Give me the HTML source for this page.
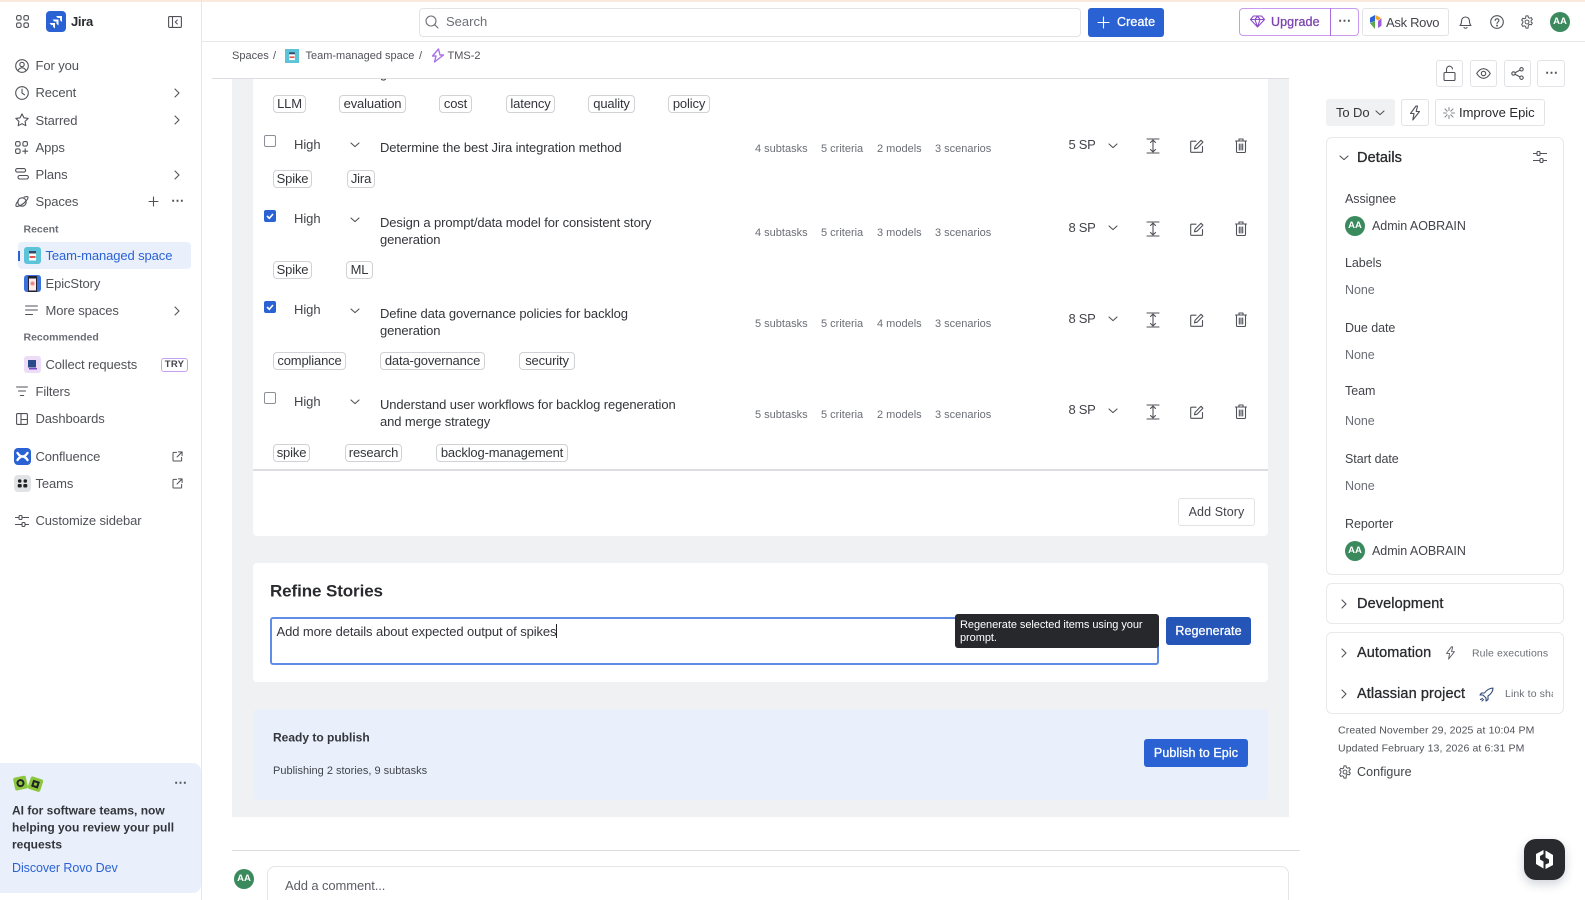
<!DOCTYPE html>
<html lang="en"><head><meta charset="utf-8"><title>TMS-2 - Jira</title>
<style>
*{box-sizing:border-box}
html,body{margin:0;padding:0;background:#fff;width:1585px;height:900px;overflow:hidden}
body{position:relative;font-family:"Liberation Sans",sans-serif;font-size:13px;color:#292a2e;filter:blur(.3px)}
.b{position:absolute}
.t{position:absolute;white-space:nowrap;transform:translateY(calc(-50% + .7px));line-height:1.2;letter-spacing:-.1px}
.s{color:#505258}
.h{font-size:13px;color:#42444a;letter-spacing:-.05px;transform:translateY(-50%)}
.sp{font-size:13px;color:#42444a;letter-spacing:-.3px;transform:translateY(-50%)}
.m{font-size:11px;color:#6b6e76;letter-spacing:0}
.ti{color:#33353a;letter-spacing:-.1px}
.tag{position:absolute;height:18px;border:1px solid #d0d2d6;border-radius:4px;text-align:center;line-height:16px;font-size:13px;color:#33353a;letter-spacing:-.15px;white-space:nowrap}
.btn{position:absolute;border:1px solid #e2e3e6;border-radius:3px;background:#fff}
.pri{position:absolute;border-radius:3px;color:#fff;text-align:center;font-weight:400;font-size:12.5px;letter-spacing:.1px;-webkit-text-stroke:.3px #fff}
.av{position:absolute;width:20px;height:20px;border-radius:50%;background:#3a8a5e;color:#fff;font-size:9.5px;font-weight:700;text-align:center;line-height:20px}
svg.i{position:absolute;fill:none;stroke:#505258;stroke-width:1.1;stroke-linecap:round;stroke-linejoin:round;overflow:visible}
.cb{position:absolute;left:264px;width:12px;height:12px;border:1px solid #8c8f97;border-radius:2px;background:#fff}
.cb.on{background:#2a62d4;border-color:#2a62d4}
.card{position:absolute;border:1px solid #e8e9eb;border-radius:6px;background:#fff;left:1326px;width:238px}
.lbl{font-size:12.5px;color:#42444a;letter-spacing:-.05px}
.non{font-size:12.5px;color:#6b6e76;letter-spacing:-.05px}
.sec{font-size:14.5px;letter-spacing:.1px;color:#292a2e;-webkit-text-stroke:.3px #292a2e}
.tiny{font-size:10.5px;color:#505258;letter-spacing:.12px}
</style></head><body>
<svg width="0" height="0" style="position:absolute">
<symbol id="cr" viewBox="0 0 12 12"><path d="M4 2 8 6 4 10"/></symbol>
<symbol id="cd" viewBox="0 0 12 12"><path d="M2 4l4 3.6L10 4"/></symbol>
<symbol id="exp" viewBox="0 0 14 16"><path d="M1 1h12M1 15h12M7 2v12M4.500 4.500 7 2l2.500 2.500M4.500 11.500 7 14l2.500-2.500"/></symbol>
<symbol id="edit" viewBox="0 0 14 14"><path d="M12.500 7.500V12.500a.8.8 0 0 1-.8.8H1.500a.8.8 0 0 1-.8-.8V3a.8.8 0 0 1 .8-.8H6M4.500 9.800l.6-2.500L11 1.300l1.900 1.900L7 9.200z"/></symbol>
<symbol id="del" viewBox="0 0 12 15"><path d="M.5 3h11M4 3V1h4v2M1.500 3v10.500a1 1 0 0 0 1 1h7a1 1 0 0 0 1-1V3M4.300 6v6M6 6v6M7.700 6v6"/></symbol>
<symbol id="ext" viewBox="0 0 12 12"><path d="M5 1.500H1.800a.7.700 0 0 0-.7.7v8a.7.700 0 0 0 .7.700h8a.7.700 0 0 0 .7-.7V7M7 1h4v4M11 1 5.500 6.500"/></symbol>
<symbol id="gear" viewBox="0 0 16 16"><circle cx="8" cy="8" r="2.200"/><path d="M6.800 1h2.400l.4 1.900 1.500.8 1.800-.7 1.200 2.100-1.400 1.200v1.700l1.400 1.200-1.200 2.100-1.800-.7-1.500.8L9.200 15H6.800l-.4-1.900-1.500-.8-1.800.7-1.200-2.100L3.300 8.700V7L1.900 5.800l1.200-2.100 1.800.7 1.500-.8z"/></symbol>
<symbol id="sl" viewBox="0 0 14 12"><path d="M0 2.500h3.500M7.500 2.500H14M0 9.500h6.500M10.500 9.500H14"/><rect x="4" y=".5" width="3" height="4" rx="1"/><rect x="7" y="7.500" width="3" height="4" rx="1"/></symbol>
<symbol id="bolt" viewBox="0 0 12 16"><path d="M7 1 1.500 8.500H5L3.800 15l6.700-8.500H7.200L8.500 1z"/></symbol>
</svg>

<!-- top peach line & header -->
<div class="b" style="left:0;top:0;width:1585px;height:1.500px;background:#fbe9dc"></div>

<!-- gray panel (under header) -->
<div class="b" style="left:232px;top:78px;width:1057px;height:739px;background:#f0f1f2"></div>
<div class="b" style="left:253px;top:79px;width:1015px;height:456.500px;background:#fff;border-radius:0 0 4px 4px"></div>
<div class="t ti" style="left:380px;top:73px">generation</div>
<div class="b" style="left:212px;top:41.500px;width:1077px;height:36px;background:#fff"></div>
<div class="b" style="left:212px;top:77.500px;width:1077px;height:1.500px;background:#dcdde0"></div>

<div class="b" style="left:201px;top:41px;width:1384px;height:1px;background:#e6e7e9"></div>
<div class="b" style="left:201px;top:0;width:1px;height:900px;background:#e6e7e9"></div>

<!-- sidebar header -->
<svg class="i" style="left:16px;top:15px" width="13" height="13" viewBox="0 0 13 13"><rect x=".6" y=".6" width="4.500" height="4.500" rx="1.500"/><rect x="7.900" y=".6" width="4.500" height="4.500" rx="1.500"/><rect x=".6" y="7.900" width="4.500" height="4.500" rx="1.500"/><rect x="7.900" y="7.900" width="4.500" height="4.500" rx="1.500"/></svg>
<svg class="b" style="left:46px;top:11px" width="20" height="21" viewBox="0 0 20 21"><rect width="20" height="21" rx="4" fill="#2a62d4"/><path d="M10 5h6v6l-2-1.800V7h-2.200zM6.500 8.500h6v6l-2-1.800v-2.200H8.300zM3.500 12h5.500v5.500l-2-1.800V14H5.200z" fill="#fff"/></svg>
<div class="t" style="left:71px;top:21px;font-weight:700;letter-spacing:-.3px;color:#292a2e">Jira</div>
<svg class="i" style="left:168px;top:16px" width="14" height="12" viewBox="0 0 14 12"><rect x=".6" y=".6" width="12.800" height="10.800" rx="1"/><path d="M4.500.6v10.800M9.300 4 7.300 6l2 2" /></svg>

<!-- sidebar items -->
<svg class="i" style="left:15px;top:59px" width="14" height="14" viewBox="0 0 14 14"><circle cx="7" cy="7" r="6.300"/><circle cx="7" cy="5.500" r="2.200"/><path d="M3 11.500c1-2 2.500-2.700 4-2.700s3 .7 4 2.700"/></svg>
<div class="t s" style="left:35.500px;top:65px">For you</div>
<svg class="i" style="left:15px;top:86px" width="14" height="14" viewBox="0 0 14 14"><circle cx="7" cy="7" r="6.300"/><path d="M7 3.200V7l2.500 1.800"/></svg>
<div class="t s" style="left:35.500px;top:92px">Recent</div>
<svg class="i" style="left:171px;top:87px" width="12" height="12"><use href="#cr"/></svg>
<svg class="i" style="left:15px;top:113px" width="14" height="14" viewBox="0 0 14 14"><path d="M7 .9l1.900 3.900 4.300.6-3.100 3 .7 4.300L7 10.700l-3.800 2 .7-4.300-3.100-3 4.300-.6z"/></svg>
<div class="t s" style="left:35.500px;top:119.500px">Starred</div>
<svg class="i" style="left:171px;top:114px" width="12" height="12"><use href="#cr"/></svg>
<svg class="i" style="left:15px;top:141px" width="14" height="13" viewBox="0 0 14 13"><rect x=".6" y=".6" width="4.500" height="4.500" rx="1.500"/><rect x="7.900" y=".6" width="4.500" height="4.500" rx="1.500"/><rect x=".6" y="7.900" width="4.500" height="4.500" rx="1.500"/><path d="M10.200 7.800v4.800M7.800 10.200h4.800"/></svg>
<div class="t s" style="left:35.500px;top:146.500px">Apps</div>
<svg class="i" style="left:15px;top:168px" width="14" height="12" viewBox="0 0 14 12"><rect x=".6" y=".6" width="10" height="3.500" rx="1.700"/><rect x="3" y="7.500" width="10.400" height="3.500" rx="1.700"/></svg>
<div class="t s" style="left:35.500px;top:174px">Plans</div>
<svg class="i" style="left:171px;top:168.500px" width="12" height="12"><use href="#cr"/></svg>
<svg class="i" style="left:15px;top:195px" width="14" height="14" viewBox="0 0 14 14"><ellipse cx="7" cy="7" rx="4.200" ry="4.200"/><path d="M3.500 5.500C1.800 7.500.5 10 1 11s3 .3 6-1.500 6-5.500 6-7-2-1-4-.3"/></svg>
<div class="t s" style="left:35.500px;top:201px">Spaces</div>
<svg class="i" style="left:148px;top:196px" width="11" height="11" viewBox="0 0 11 11"><path d="M5.500 1v9M1 5.500h9"/></svg>
<div class="t s" style="left:171px;top:200px;font-size:13px;font-weight:700;letter-spacing:1px;line-height:1">&#8943;</div>
<div class="t" style="left:23.500px;top:228.500px;font-size:10.500px;font-weight:700;color:#6b6e76;letter-spacing:0">Recent</div>
<div class="b" style="left:18px;top:242px;width:173px;height:27px;background:#e9f0fc;border-radius:4px"></div>
<div class="b" style="left:18px;top:251px;width:1.500px;height:10px;background:#2a62d4"></div>
<svg class="b" style="left:24px;top:247px" width="17" height="17" viewBox="0 0 17 17"><rect width="17" height="17" rx="3" fill="#5dc3d8"/><rect x="5" y="4" width="7" height="2.500" fill="#3a4a66"/><rect x="5" y="6.500" width="7" height="7" fill="#fff"/><rect x="5.500" y="9" width="6" height="2" fill="#e2574c"/></svg>
<div class="t" style="left:45.500px;top:255px;color:#2a62d4">Team-managed space</div>
<svg class="b" style="left:24px;top:275px" width="17" height="17" viewBox="0 0 17 17"><rect width="17" height="17" rx="3" fill="#3a72dc"/><rect x="4" y="1" width="9" height="16" fill="#223"/><rect x="5" y="3.500" width="7" height="12" fill="#fbeae5"/><circle cx="8.500" cy="8.500" r="2" fill="#e88"/></svg>
<div class="t s" style="left:45.500px;top:282.500px">EpicStory</div>
<svg class="i" style="left:25px;top:305px" width="13" height="11" viewBox="0 0 13 11"><path d="M.6 1h11.800M.6 5h11.800M.6 9.500h7"/></svg>
<div class="t s" style="left:45.500px;top:310px">More spaces</div>
<svg class="i" style="left:171px;top:304.500px" width="12" height="12"><use href="#cr"/></svg>
<div class="t" style="left:23.500px;top:337px;font-size:10.500px;font-weight:700;color:#6b6e76;letter-spacing:0">Recommended</div>
<svg class="b" style="left:24px;top:356px" width="17" height="17" viewBox="0 0 17 17"><rect width="17" height="17" rx="3" fill="#ecdcf8"/><rect x="4" y="4" width="8" height="7.500" fill="#2a4a8a"/><path d="M5 12h8v1.500H5z" fill="#7a4bc8"/></svg>
<div class="t s" style="left:45.500px;top:364px">Collect requests</div>
<div class="b" style="left:161px;top:358px;width:27px;height:14px;border:1px solid #c9a0ef;border-radius:3px;text-align:center;font-size:9.500px;line-height:12px;font-weight:700;color:#44464c;letter-spacing:.3px">TRY</div>
<svg class="i" style="left:16px;top:386px" width="12" height="11" viewBox="0 0 12 11"><path d="M.6 1h10.800M2.500 5h7M4.300 9.500h3.400"/></svg>
<div class="t s" style="left:35.500px;top:391px">Filters</div>
<svg class="i" style="left:16px;top:413px" width="12" height="12" viewBox="0 0 12 12"><rect x=".6" y=".6" width="10.800" height="10.800" rx="1"/><path d="M5 .6v10.800M5 6.500h6.400"/></svg>
<div class="t s" style="left:35.500px;top:418px">Dashboards</div>
<svg class="b" style="left:13.500px;top:448px" width="17" height="17" viewBox="0 0 17 17"><rect width="17" height="17" rx="4" fill="#2a62d4"/><path d="M3.500 5c2 3 3.500 3.500 5 3.500s3-.5 5-3.500M3.500 12c2-3 3.500-3.500 5-3.500s3 .5 5 3.500" fill="none" stroke="#fff" stroke-width="2.400" stroke-linecap="round"/></svg>
<div class="t s" style="left:35.500px;top:455.500px">Confluence</div>
<svg class="i" style="left:171.500px;top:450.500px" width="11" height="11"><use href="#ext"/></svg>
<svg class="b" style="left:13.500px;top:475px" width="17" height="17" viewBox="0 0 17 17"><rect width="17" height="17" rx="4" fill="#e2e3e6"/><circle cx="5.700" cy="6" r="1.800" fill="#222"/><circle cx="11.300" cy="6" r="1.800" fill="#222"/><rect x="3.700" y="9" width="4" height="3.500" rx="1" fill="#222"/><rect x="9.300" y="9" width="4" height="3.500" rx="1" fill="#222"/></svg>
<div class="t s" style="left:35.500px;top:482.500px">Teams</div>
<svg class="i" style="left:171.500px;top:477.500px" width="11" height="11"><use href="#ext"/></svg>
<svg class="i" style="left:15px;top:515px" width="14" height="12"><use href="#sl"/></svg>
<div class="t s" style="left:35.500px;top:520px">Customize sidebar</div>

<!-- promo -->
<div class="b" style="left:0;top:763px;width:201px;height:130px;background:#e9f0fc;border-radius:0 8px 8px 0"></div>
<svg class="b" style="left:12px;top:774px" width="33" height="20" viewBox="0 0 33 20"><g transform="rotate(-12 9 9)"><rect x="2" y="2.500" width="13" height="13" rx="2" fill="#8cc63f"/><circle cx="8.500" cy="9" r="3" fill="none" stroke="#222" stroke-width="2"/></g><g transform="rotate(18 23 10)"><rect x="17" y="3.500" width="13" height="13" rx="2" fill="#8cc63f"/><rect x="21" y="7.500" width="5" height="5" fill="none" stroke="#222" stroke-width="2"/></g></svg>
<div class="t s" style="left:174px;top:782px;font-size:13px;font-weight:700;line-height:1;letter-spacing:1px">&#8943;</div>
<div class="t" style="left:12px;top:810px;font-size:12px;font-weight:700;letter-spacing:0;color:#33353a">AI for software teams, now</div>
<div class="t" style="left:12px;top:827px;font-size:12px;font-weight:700;letter-spacing:0;color:#33353a">helping you review your pull</div>
<div class="t" style="left:12px;top:844px;font-size:12px;font-weight:700;letter-spacing:0;color:#33353a">requests</div>
<div class="t" style="left:12px;top:867.500px;font-size:12.500px;color:#2a62d4;letter-spacing:-.08px">Discover Rovo Dev</div>

<!-- top bar -->
<div class="b" style="left:419px;top:8px;width:662px;height:29px;border:1px solid #e2e3e6;border-radius:4px"></div>
<svg class="i" style="left:425px;top:15px;stroke:#6b6e76" width="14" height="14" viewBox="0 0 14 14"><circle cx="6" cy="6" r="5"/><path d="M9.700 9.700 13 13"/></svg>
<div class="t" style="left:446px;top:21px;color:#6b6e76;letter-spacing:0">Search</div>
<div class="pri" style="left:1088px;top:8px;width:76px;height:29px;background:#2a62d4"></div>
<svg class="i" style="left:1097px;top:16px;stroke:#fff" width="13" height="13" viewBox="0 0 13 13"><path d="M6.500 1v11M1 6.500h11"/></svg>
<div class="t" style="left:1117px;top:21.500px;color:#fff;font-size:12.500px;letter-spacing:.1px;-webkit-text-stroke:.3px #fff">Create</div>
<div class="b" style="left:1239px;top:8px;width:120px;height:27.500px;border:1px solid #c99aed;border-radius:4px"></div>
<div class="b" style="left:1330px;top:8px;width:1px;height:27.500px;background:#a86ee0"></div>
<svg class="i" style="left:1250px;top:15px;stroke:#8a4bc8" width="15" height="13" viewBox="0 0 15 13"><path d="M3.500 1h8l3 3.500L7.500 12 .5 4.500zM.5 4.500h14M5 4.500l2.500 7.500L10 4.500 7.500 1z"/></svg>
<div class="t" style="left:1271px;top:21.500px;color:#7c45ae;font-size:12.500px;letter-spacing:.1px;-webkit-text-stroke:.3px #7c45ae">Upgrade</div>
<div class="t s" style="left:1338px;top:20px;font-size:13px;font-weight:700;line-height:1;letter-spacing:1px">&#8943;</div>
<div class="btn" style="left:1362px;top:8px;width:87px;height:27.500px"></div>
<svg class="b" style="left:1369px;top:15px" width="13" height="14" viewBox="0 0 13 14"><path d="M6 0 1 2.800v5L6 6z" fill="#2a62d4"/><path d="M6.500 0 12 3 9 5.500 6.500 4z" fill="#f5a623"/><path d="M12.500 3.300v7.500L9 13V6z" fill="#9c5ce0"/><path d="M1 8.200 6 6v8z" fill="#5aa84a"/></svg>
<div class="t" style="left:1386px;top:21.500px;color:#44464c;font-size:13px;letter-spacing:-.3px">Ask Rovo</div>
<svg class="i" style="left:1459px;top:15px" width="13" height="14" viewBox="0 0 13 14"><path d="M1 10.500c1-1 1.500-2 1.500-4.500a4 4 0 0 1 8 0c0 2.500.5 3.500 1.500 4.500zM5 12.500c.5 1 2.500 1 3 0"/></svg>
<svg class="i" style="left:1490px;top:15px" width="14" height="14" viewBox="0 0 14 14"><circle cx="7" cy="7" r="6.300"/><path d="M5.200 5.500c0-2.300 3.700-2.300 3.700 0 0 1.500-1.900 1.500-1.900 3"/><circle cx="7" cy="10.600" r=".4"/></svg>
<svg class="i" style="left:1520px;top:15px" width="14" height="14"><use href="#gear"/></svg>
<div class="av" style="left:1550px;top:11.500px">AA</div>

<!-- breadcrumbs -->
<div class="t" style="left:232px;top:55.500px;font-size:11px;color:#505258;letter-spacing:0">Spaces</div>
<div class="t" style="left:273px;top:55.500px;font-size:11px;color:#505258;letter-spacing:0">/</div>
<svg class="b" style="left:285px;top:49px" width="14" height="14" viewBox="0 0 17 17"><rect width="17" height="17" fill="#5dc3d8"/><rect x="5" y="4" width="7" height="2.500" fill="#3a4a66"/><rect x="5" y="6.500" width="7" height="7" fill="#fff"/><rect x="5.500" y="9" width="6" height="2" fill="#e2574c"/></svg>
<div class="t" style="left:305.500px;top:55.500px;font-size:11px;color:#505258;letter-spacing:0">Team-managed space</div>
<div class="t" style="left:419px;top:55.500px;font-size:11px;color:#505258;letter-spacing:0">/</div>
<svg class="i" style="left:431px;top:48px;stroke:#a872e8;stroke-width:1.400" width="14" height="15" viewBox="0 0 14 15"><path d="M7.500 1 1.500 8h3.500L4 12l-.5 2L12.500 7H9z"/></svg>
<div class="t" style="left:447.500px;top:55.500px;font-size:11px;color:#505258;letter-spacing:0">TMS-2</div>

<!-- tags row 0 -->
<div class="tag" style="left:273px;top:95px;width:33px">LLM</div>
<div class="tag" style="left:339px;top:95px;width:67px">evaluation</div>
<div class="tag" style="left:439px;top:95px;width:33px">cost</div>
<div class="tag" style="left:506px;top:95px;width:49px">latency</div>
<div class="tag" style="left:588px;top:95px;width:47px">quality</div>
<div class="tag" style="left:668px;top:95px;width:42px">policy</div>

<!-- row 1 -->
<div class="cb" style="top:135px"></div>
<div class="t h" style="left:294px;top:144.500px">High</div>
<svg class="i" style="left:349px;top:139px" width="12" height="12"><use href="#cd"/></svg>
<div class="t ti" style="left:380px;top:146.500px">Determine the best Jira integration method</div>
<div class="t m" style="left:755px;top:149px">4 subtasks</div><div class="t m" style="left:821px;top:149px">5 criteria</div><div class="t m" style="left:877px;top:149px">2 models</div><div class="t m" style="left:935px;top:149px">3 scenarios</div>
<div class="t sp" style="left:1068.500px;top:144.500px">5 SP</div>
<svg class="i" style="left:1107px;top:139.500px" width="12" height="12"><use href="#cd"/></svg>
<svg class="i" style="left:1146px;top:138px" width="14" height="16"><use href="#exp"/></svg>
<svg class="i" style="left:1190px;top:139px" width="14" height="14"><use href="#edit"/></svg>
<svg class="i" style="left:1235px;top:138px" width="12" height="15"><use href="#del"/></svg>
<div class="tag" style="left:273px;top:170px;width:39px">Spike</div>
<div class="tag" style="left:347px;top:170px;width:28px">Jira</div>

<!-- row 2 -->
<div class="cb on" style="top:210px"><svg width="10" height="10" style="position:absolute;left:0;top:0" viewBox="0 0 10 10"><path d="M2 5l2.300 2.300L8 3" fill="none" stroke="#fff" stroke-width="1.600"/></svg></div>
<div class="t h" style="left:294px;top:219px">High</div>
<svg class="i" style="left:349px;top:213.500px" width="12" height="12"><use href="#cd"/></svg>
<div class="t ti" style="left:380px;top:221.500px">Design a prompt/data model for consistent story</div>
<div class="t ti" style="left:380px;top:239px">generation</div>
<div class="t m" style="left:755px;top:232.500px">4 subtasks</div><div class="t m" style="left:821px;top:232.500px">5 criteria</div><div class="t m" style="left:877px;top:232.500px">3 models</div><div class="t m" style="left:935px;top:232.500px">3 scenarios</div>
<div class="t sp" style="left:1068.500px;top:227.500px">8 SP</div>
<svg class="i" style="left:1107px;top:222px" width="12" height="12"><use href="#cd"/></svg>
<svg class="i" style="left:1146px;top:221px" width="14" height="16"><use href="#exp"/></svg>
<svg class="i" style="left:1190px;top:222px" width="14" height="14"><use href="#edit"/></svg>
<svg class="i" style="left:1235px;top:221px" width="12" height="15"><use href="#del"/></svg>
<div class="tag" style="left:273px;top:261px;width:39px">Spike</div>
<div class="tag" style="left:346px;top:261px;width:27px">ML</div>

<!-- row 3 -->
<div class="cb on" style="top:301px"><svg width="10" height="10" style="position:absolute;left:0;top:0" viewBox="0 0 10 10"><path d="M2 5l2.300 2.300L8 3" fill="none" stroke="#fff" stroke-width="1.600"/></svg></div>
<div class="t h" style="left:294px;top:310px">High</div>
<svg class="i" style="left:349px;top:304.500px" width="12" height="12"><use href="#cd"/></svg>
<div class="t ti" style="left:380px;top:313px">Define data governance policies for backlog</div>
<div class="t ti" style="left:380px;top:330px">generation</div>
<div class="t m" style="left:755px;top:323.500px">5 subtasks</div><div class="t m" style="left:821px;top:323.500px">5 criteria</div><div class="t m" style="left:877px;top:323.500px">4 models</div><div class="t m" style="left:935px;top:323.500px">3 scenarios</div>
<div class="t sp" style="left:1068.500px;top:318.500px">8 SP</div>
<svg class="i" style="left:1107px;top:313px" width="12" height="12"><use href="#cd"/></svg>
<svg class="i" style="left:1146px;top:312px" width="14" height="16"><use href="#exp"/></svg>
<svg class="i" style="left:1190px;top:313px" width="14" height="14"><use href="#edit"/></svg>
<svg class="i" style="left:1235px;top:312px" width="12" height="15"><use href="#del"/></svg>
<div class="tag" style="left:273px;top:352px;width:73px">compliance</div>
<div class="tag" style="left:380px;top:352px;width:105px">data-governance</div>
<div class="tag" style="left:519px;top:352px;width:56px">security</div>

<!-- row 4 -->
<div class="cb" style="top:392px"></div>
<div class="t h" style="left:294px;top:401.500px">High</div>
<svg class="i" style="left:349px;top:396px" width="12" height="12"><use href="#cd"/></svg>
<div class="t ti" style="left:380px;top:404px">Understand user workflows for backlog regeneration</div>
<div class="t ti" style="left:380px;top:421px">and merge strategy</div>
<div class="t m" style="left:755px;top:415px">5 subtasks</div><div class="t m" style="left:821px;top:415px">5 criteria</div><div class="t m" style="left:877px;top:415px">2 models</div><div class="t m" style="left:935px;top:415px">3 scenarios</div>
<div class="t sp" style="left:1068.500px;top:410px">8 SP</div>
<svg class="i" style="left:1107px;top:404.500px" width="12" height="12"><use href="#cd"/></svg>
<svg class="i" style="left:1146px;top:403.500px" width="14" height="16"><use href="#exp"/></svg>
<svg class="i" style="left:1190px;top:404.500px" width="14" height="14"><use href="#edit"/></svg>
<svg class="i" style="left:1235px;top:403.500px" width="12" height="15"><use href="#del"/></svg>
<div class="tag" style="left:273px;top:443.500px;width:37px">spike</div>
<div class="tag" style="left:345px;top:443.500px;width:57px">research</div>
<div class="tag" style="left:436px;top:443.500px;width:132px">backlog-management</div>

<div class="b" style="left:253px;top:469px;width:1015px;height:1.500px;background:#dcdde0"></div>
<div class="btn" style="left:1178px;top:498px;width:77px;height:28px;text-align:center;line-height:26px;font-size:12.500px;color:#42444a;letter-spacing:.1px">Add Story</div>

<!-- refine -->
<div class="b" style="left:253px;top:562.500px;width:1015px;height:119.500px;background:#fff;border-radius:4px"></div>
<div class="t" style="left:270px;top:590.500px;font-size:17px;font-weight:700;letter-spacing:-.1px;color:#292a2e">Refine Stories</div>
<div class="b" style="left:270px;top:617px;width:889px;height:48px;border:2px solid #5f8ce6;border-radius:3px"></div>
<div class="t ti" style="left:276.500px;top:631px">Add more details about expected output of spikes</div>
<div class="b" style="left:556px;top:624px;width:1px;height:14px;background:#222"></div>
<div class="b" style="left:955px;top:613.500px;width:204px;height:34.500px;background:#26282c;border-radius:3px"></div>
<div class="t" style="left:960px;top:624.500px;font-size:11px;color:#fff;letter-spacing:-.06px">Regenerate selected items using your</div>
<div class="t" style="left:960px;top:638px;font-size:11px;color:#fff;letter-spacing:-.06px">prompt.</div>
<div class="pri" style="left:1166px;top:617px;width:85px;height:27.500px;background:#2655b8;line-height:28.500px">Regenerate</div>

<!-- publish -->
<div class="b" style="left:253px;top:709px;width:1015px;height:90.500px;background:#e9f0fc;border-radius:4px"></div>
<div class="t" style="left:273px;top:737px;font-size:12px;font-weight:700;letter-spacing:0;color:#33353a">Ready to publish</div>
<div class="t" style="left:273px;top:770.500px;font-size:11px;color:#42444a;letter-spacing:0">Publishing 2 stories, 9 subtasks</div>
<div class="pri" style="left:1144px;top:738.500px;width:104px;height:28px;background:#2a62d4;line-height:29px">Publish to Epic</div>

<!-- comment -->
<div class="b" style="left:232px;top:849.500px;width:1068px;height:1.500px;background:#dcdde0"></div>
<div class="av" style="left:234px;top:868.500px">AA</div>
<div class="b" style="left:267px;top:865.500px;width:1022px;height:45px;border:1.500px solid #e4e5e8;border-radius:8px"></div>
<div class="t" style="left:285px;top:885px;color:#5d5f66;letter-spacing:-.1px">Add a comment...</div>

<!-- right actions -->
<div class="btn" style="left:1436px;top:60px;width:27px;height:27px"></div>
<svg class="i" style="left:1443px;top:66px" width="13" height="15" viewBox="0 0 13 15"><rect x="1" y="6.500" width="11" height="8" rx="1"/><path d="M3.500 6.500V3.500a3 3 0 0 1 6-.6"/></svg>
<div class="btn" style="left:1470px;top:60px;width:27px;height:27px"></div>
<svg class="i" style="left:1476px;top:68px" width="15" height="11" viewBox="0 0 15 11"><path d="M.7 5.500C3 1.800 5.300.7 7.500.7s4.500 1.100 6.800 4.800C12 9.200 9.700 10.300 7.500 10.300S3 9.200.7 5.500z"/><circle cx="7.500" cy="5.500" r="2.200"/></svg>
<div class="btn" style="left:1504px;top:60px;width:27px;height:27px"></div>
<svg class="i" style="left:1511px;top:67px" width="13" height="13" viewBox="0 0 13 13"><circle cx="2.500" cy="6.500" r="1.700"/><circle cx="10.500" cy="2.300" r="1.700"/><circle cx="10.500" cy="10.700" r="1.700"/><path d="M4 5.700 9 3.100M4 7.300l5 2.600"/></svg>
<div class="btn" style="left:1537px;top:60px;width:28px;height:27px"></div>
<div class="t s" style="left:1545px;top:72px;font-size:13px;font-weight:700;line-height:1;letter-spacing:1px">&#8943;</div>

<div class="b" style="left:1326px;top:99px;width:69px;height:27px;background:#f0f1f2;border-radius:3px"></div>
<div class="t" style="left:1336px;top:112px;color:#33353a">To Do</div>
<svg class="i" style="left:1374px;top:106.500px" width="12" height="12"><use href="#cd"/></svg>
<div class="btn" style="left:1401px;top:99px;width:28px;height:27px"></div>
<svg class="i" style="left:1409px;top:105px" width="12" height="16"><use href="#bolt"/></svg>
<div class="btn" style="left:1435px;top:99px;width:110px;height:27px"></div>
<svg class="i" style="left:1443px;top:107px;stroke:#8a8d94" width="12" height="12" viewBox="0 0 12 12"><path d="M6 .5v3M6 8.500v3M.5 6h3M8.500 6h3M2 2l2.200 2.200M7.800 7.800 10 10M10 2 7.800 4.200M4.200 7.800 2 10"/></svg>
<div class="t" style="left:1459px;top:112px;letter-spacing:-.02px;color:#292a2e">Improve Epic</div>

<!-- details -->
<div class="card" style="top:137px;height:438px"></div>
<svg class="i" style="left:1338px;top:152px" width="12" height="12"><use href="#cd"/></svg>
<div class="t sec" style="left:1357px;top:158px">Details</div>
<svg class="i" style="left:1533px;top:151px" width="14" height="12"><use href="#sl"/></svg>
<div class="t lbl" style="left:1345px;top:198.500px">Assignee</div>
<div class="av" style="left:1345px;top:215.500px">AA</div>
<div class="t lbl" style="left:1372px;top:225.500px">Admin AOBRAIN</div>
<div class="t lbl" style="left:1345px;top:262.500px">Labels</div>
<div class="t non" style="left:1345px;top:289.500px">None</div>
<div class="t lbl" style="left:1345px;top:327.500px">Due date</div>
<div class="t non" style="left:1345px;top:354.500px">None</div>
<div class="t lbl" style="left:1345px;top:391px">Team</div>
<div class="t non" style="left:1345px;top:420.500px">None</div>
<div class="t lbl" style="left:1345px;top:459px">Start date</div>
<div class="t non" style="left:1345px;top:486px">None</div>
<div class="t lbl" style="left:1345px;top:523.500px">Reporter</div>
<div class="av" style="left:1345px;top:541px">AA</div>
<div class="t lbl" style="left:1372px;top:550.500px">Admin AOBRAIN</div>

<div class="card" style="top:583px;height:41px"></div>
<svg class="i" style="left:1338px;top:597.500px" width="12" height="12"><use href="#cr"/></svg>
<div class="t sec" style="left:1357px;top:603.500px">Development</div>

<div class="card" style="top:632px;height:82px"></div>
<svg class="i" style="left:1338px;top:647px" width="12" height="12"><use href="#cr"/></svg>
<div class="t sec" style="left:1357px;top:653px">Automation</div>
<svg class="i" style="left:1445px;top:646px;stroke:#5d5f66" width="11" height="14"><use href="#bolt"/></svg>
<div class="t" style="left:1472px;top:653px;font-size:10.500px;color:#6b6e76;letter-spacing:.1px">Rule executions</div>
<svg class="i" style="left:1338px;top:687.500px" width="12" height="12"><use href="#cr"/></svg>
<div class="t sec" style="left:1357px;top:693.500px">Atlassian project</div>
<svg class="i" style="left:1479px;top:687px;stroke:#2f4a78" width="15" height="15" viewBox="0 0 15 15"><path d="M14 1c-4 .3-6.500 2-8.500 5H2.500L1 8h3l3 3v3l2-1.500V9c3-2 5-5 5-8zM1.500 12.500l2-1M3 14l1.500-1.500"/></svg>
<div class="b" style="left:1505px;top:686px;width:48px;height:16px;overflow:hidden"><div style="position:absolute;left:0;top:2px;white-space:nowrap;font-size:10.500px;color:#6b6e76;letter-spacing:.1px">Link to share</div></div>

<div class="t tiny" style="left:1338px;top:729.500px">Created November 29, 2025 at 10:04 PM</div>
<div class="t tiny" style="left:1338px;top:748px">Updated February 13, 2026 at 6:31 PM</div>
<svg class="i" style="left:1338px;top:765px" width="14" height="14"><use href="#gear"/></svg>
<div class="t" style="left:1357px;top:771.500px;font-size:12.500px;color:#42444a;letter-spacing:.05px">Configure</div>

<!-- float -->
<div class="b" style="left:1524px;top:839px;width:41px;height:41px;background:#292a2e;border-radius:12px;box-shadow:0 4px 10px rgba(9,30,66,.2)"></div>
<svg class="b" style="left:1535px;top:849px" width="19" height="21" viewBox="0 0 19 21"><path d="M8.500 1 1 5v10l7.500 4.500v-7L5 10.500V7L8.500 5z" fill="#fff"/><path d="M10.500 1.500 18 6v10l-7.500 4v-4.500L14 14v-3.500L10.500 8.500z" fill="#fff"/></svg>
</body></html>
